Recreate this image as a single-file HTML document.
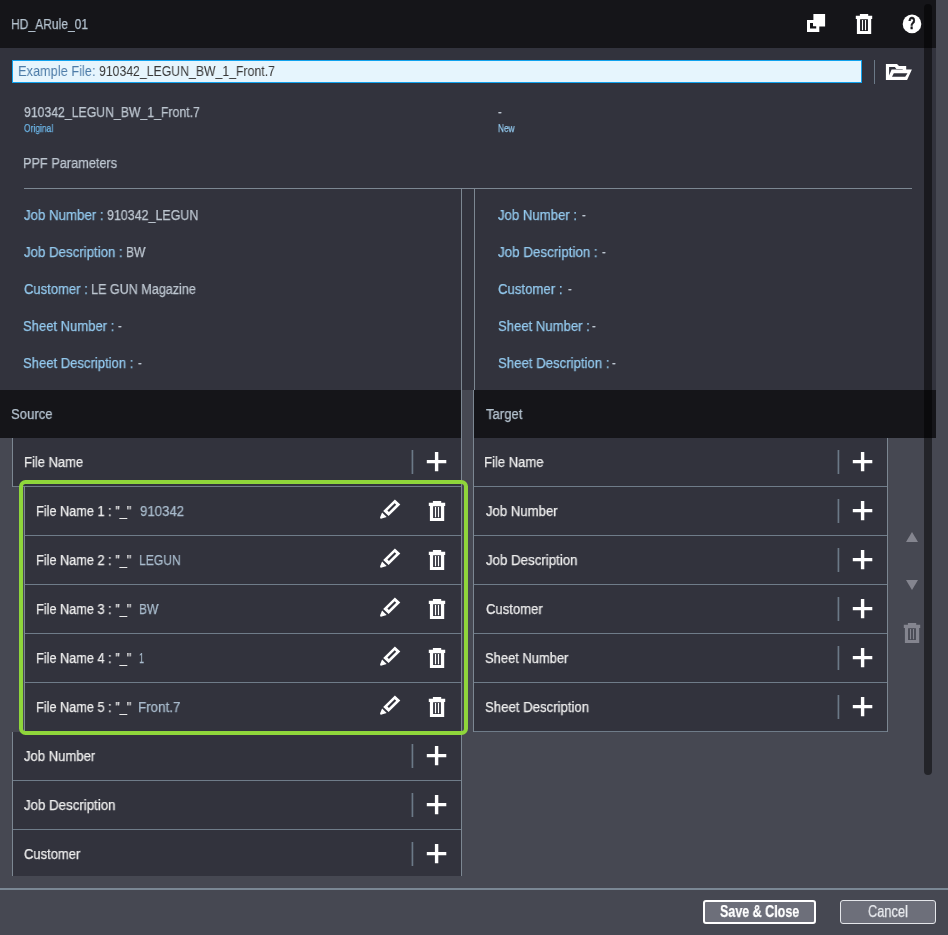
<!DOCTYPE html>
<html lang="en">
<head>
<meta charset="utf-8">
<title>HD_ARule_01</title>
<style>
*{box-sizing:border-box;margin:0;padding:0}
html,body{width:948px;height:935px;overflow:hidden;background:#464852}
body{position:relative;font-family:"Liberation Sans",sans-serif;font-size:14.7px;color:#bdc6d0}
.s{display:inline-block;white-space:pre;transform-origin:0 50%;line-height:1}
.abs{position:absolute}
.t{position:absolute;white-space:pre;line-height:1;transform-origin:0 0;will-change:transform;-webkit-text-stroke:.25px currentColor}
.hdr{position:absolute;left:0;top:0;width:936px;height:48px;background:#151519}
.top{position:absolute;left:0;top:48px;width:936px;height:342px;background:#32333d}
.inp{position:absolute;left:12px;top:12px;width:850px;height:23px;background:#e6f5fd;border:1px solid #10a2ee}
.vsep{position:absolute;width:1px;background:#6b7987}
.rule{position:absolute;left:24px;top:140px;width:888px;height:1px;background:#7c8792}
.vl{position:absolute;top:140px;width:1px;height:202px;background:#7c8792}
.bar{position:absolute;top:390px;height:48px;background:#151519}
.list{position:absolute;top:438px;overflow:hidden}
.vline{position:absolute;width:1px;background:#7c8792}
.nestwrap{margin-left:12px;width:438px}
.row{position:relative;height:49px;border-bottom:1px solid #6f7c89;background:#32333d}
.row .t{top:16px}
.row .vsep{top:12px;height:24px;width:3px;background:linear-gradient(90deg,rgba(107,121,135,.4) 0 1px,#6b7987 1px 2px,rgba(107,121,135,.25) 2px 3px)}
.plus{position:absolute;top:13px;width:21px;height:21px}
.ico{position:absolute}
.thumb{position:absolute;left:924px;top:4px;width:8px;height:771px;border-radius:4px;background:rgba(0,0,0,.5)}
.foot{position:absolute;left:0;top:888px;width:948px;height:2px;background:#7a8794}
.btn{position:absolute;top:900px;height:24px;background:#6d6f7a;border-radius:3px;color:#fff}
</style>
</head>
<body>

<header class="hdr">
  <span class="t" style="left:11px;top:17.00px;color:#b4c2cf;transform:scaleX(0.8205)">HD_ARule_01</span>
  <svg class="ico" style="left:806px;top:13px" width="21" height="21" viewBox="806 13 21 21">
    <rect x="813.4" y="14" width="11.7" height="12.5" fill="#fff"/>
    <rect x="807" y="20" width="12.3" height="12" fill="#fff"/>
    <path d="M810 23h3v3.2h3.2v2.4H810z" fill="#151519"/>
  </svg>
  <svg class="ico" style="left:855px;top:13px" width="18" height="22" viewBox="0 0 18 22">
    <use href="#trash" fill="#fff"/>
  </svg>
  <svg class="ico" style="left:902px;top:14px;will-change:transform" width="20" height="20" viewBox="0 0 20 20">
    <circle cx="10" cy="9.9" r="9.3" fill="#fff"/>
    <text transform="translate(9.85 15.3) scale(.74 1)" text-anchor="middle" font-family="Liberation Sans, sans-serif" font-weight="700" font-size="16.3" fill="#151519" stroke="#151519" stroke-width=".55">?</text>
  </svg>
</header>

<svg width="0" height="0" style="position:absolute">
  <defs>
    <g id="trash">
      <path fill-rule="evenodd" d="M4.9 .9h8.3v1.9h4v3.2h-1v15H1.9v-15h-1.1V2.8h4.1z M5.1 6.2v11.7h7.8V6.2z M6.9 7h1.2v10.2H6.9z M9.9 7h1.2v10.2H9.9z"/>
    </g>
    <g id="plus"><path d="M8.9 .9h3.4v8h8v3.3h-8v8H8.9v-8H.8V8.9h8.1z"/></g>
    <g id="pencil">
      <path fill-rule="evenodd" d="M14.9 .4L20.3 5.6 8.6 17.1 3.2 12z M14.7 4.3L7.4 11.5 8.9 13 16.2 5.8z"/>
      <path d="M2.1 13.5L6.7 18 1.7 19.6Q-.3 20 .2 18z"/>
    </g>
  </defs>
</svg>

<section class="top">
  <div class="inp"></div>
  <span class="t" style="left:18px;top:16.00px;color:#4d7ca8;-webkit-text-stroke:0;transform:scaleX(0.8702)">Example File:</span>
  <span class="t" style="left:99px;top:16.00px;color:#383838;-webkit-text-stroke:0;transform:scaleX(0.8349)">910342_LEGUN_BW_1_Front.7</span>
  <div class="vsep" style="left:874px;top:12px;height:24px"></div>
  <svg class="ico" style="left:884px;top:14px" width="30" height="20" viewBox="884 62 30 20">
    <path fill="#fff" fill-rule="evenodd" d="M885.9 64H897l2 1.9h7.2v3.6h5.7L907.1 80H885.9z M889.1 67v8.5l2.5-5.9h11.1v-.7h-6.3L894.8 67z M893.8 73.3h13.7l-2.3 3.5H892z"/>
  </svg>

  <span class="t" style="left:24px;top:57.00px;color:#bdc6d0;transform:scaleX(0.8346)">910342_LEGUN_BW_1_Front.7</span>
  <span class="t" style="left:24px;top:75.00px;color:#6db6e8;font-size:11px;transform:scaleX(0.7698)">Original</span>
  <span class="t" style="left:498px;top:57.00px;color:#bdc6d0;transform:scaleX(0.7507)">-</span>
  <span class="t" style="left:498px;top:75.00px;color:#93c9ee;font-size:11px;transform:scaleX(0.7505)">New</span>
  <span class="t" style="left:23px;top:108.00px;color:#bdc6d0;transform:scaleX(0.8663)">PPF Parameters</span>
  <div class="rule"></div>
  <div class="vl" style="left:461px"></div>
  <div class="vl" style="left:474px"></div>

  <span class="t" style="left:24px;top:160.00px;color:#93c9ee;transform:scaleX(0.9030)">Job Number :</span><span class="t" style="left:107px;top:160.00px;color:#bdc6d0;transform:scaleX(0.8472)">910342_LEGUN</span>
  <span class="t" style="left:24px;top:197.00px;color:#93c9ee;transform:scaleX(0.9025)">Job Description :</span><span class="t" style="left:126px;top:197.00px;color:#bdc6d0;transform:scaleX(0.8155)">BW</span>
  <span class="t" style="left:24px;top:234.00px;color:#93c9ee;transform:scaleX(0.8885)">Customer :</span><span class="t" style="left:91px;top:234.00px;color:#bdc6d0;transform:scaleX(0.8563)">LE GUN Magazine</span>
  <span class="t" style="left:23px;top:271.00px;color:#93c9ee;transform:scaleX(0.8869)">Sheet Number :</span><span class="t" style="left:118px;top:271.00px;color:#bdc6d0;transform:scaleX(0.7507)">-</span>
  <span class="t" style="left:23px;top:308.00px;color:#93c9ee;transform:scaleX(0.8895)">Sheet Description :</span><span class="t" style="left:138px;top:308.00px;color:#bdc6d0;transform:scaleX(0.7507)">-</span>

  <span class="t" style="left:498px;top:160.00px;color:#93c9ee;transform:scaleX(0.8969)">Job Number :</span><span class="t" style="left:582px;top:160.00px;color:#bdc6d0;transform:scaleX(0.7507)">-</span>
  <span class="t" style="left:498px;top:197.00px;color:#93c9ee;transform:scaleX(0.9114)">Job Description :</span><span class="t" style="left:602px;top:197.00px;color:#bdc6d0;transform:scaleX(0.7507)">-</span>
  <span class="t" style="left:498px;top:234.00px;color:#93c9ee;transform:scaleX(0.8981)">Customer :</span><span class="t" style="left:568px;top:234.00px;color:#bdc6d0;transform:scaleX(0.7507)">-</span>
  <span class="t" style="left:498px;top:271.00px;color:#93c9ee;transform:scaleX(0.8927)">Sheet Number :</span><span class="t" style="left:592px;top:271.00px;color:#bdc6d0;transform:scaleX(0.7507)">-</span>
  <span class="t" style="left:498px;top:308.00px;color:#93c9ee;transform:scaleX(0.8987)">Sheet Description :</span><span class="t" style="left:612px;top:308.00px;color:#bdc6d0;transform:scaleX(0.7507)">-</span>
</section>

<div class="bar" style="left:0;width:461px"><span class="t" style="left:11px;top:17.00px;color:#b4c2cf;transform:scaleX(0.8940)">Source</span></div>
<div class="bar" style="left:474px;width:462px"><span class="t" style="left:12px;top:17.00px;color:#b4c2cf;transform:scaleX(0.8914)">Target</span></div>

<!-- SOURCE LIST -->
<section class="list" style="left:12px;width:449px;height:438px">
  <div class="row">
    <span class="t" style="left:12px;top:17.00px;color:#ececec;transform:scaleX(0.8844)">File Name</span>
    <div class="vsep" style="left:399px"></div>
    <svg class="plus" style="left:413.95px" viewBox="0 0 21 21"><use href="#plus" fill="#fff"/></svg>
  </div>
  <div class="nestwrap">
  <div class="row nest">
    <span class="t" style="left:12px;top:17.00px;color:#ececec;transform:scaleX(0.8659)">File Name 1 : "_"</span><span class="t" style="left:116px;top:17.00px;color:#a9bccd;transform:scaleX(0.9003)">910342</span>
    <svg class="ico" style="left:355.8px;top:12px" width="21" height="21" viewBox="0 0 21 21"><use href="#pencil" fill="#fff"/></svg>
    <svg class="ico" style="left:404.1px;top:12.7px" width="18" height="22" viewBox="0 0 18 22"><use href="#trash" fill="#fff"/></svg>
  </div>
  <div class="row nest">
    <span class="t" style="left:12px;top:17.00px;color:#ececec;transform:scaleX(0.8659)">File Name 2 : "_"</span><span class="t" style="left:115px;top:17.00px;color:#a9bccd;transform:scaleX(0.8240)">LEGUN</span>
    <svg class="ico" style="left:355.8px;top:12px" width="21" height="21" viewBox="0 0 21 21"><use href="#pencil" fill="#fff"/></svg>
    <svg class="ico" style="left:404.1px;top:12.7px" width="18" height="22" viewBox="0 0 18 22"><use href="#trash" fill="#fff"/></svg>
  </div>
  <div class="row nest">
    <span class="t" style="left:12px;top:17.00px;color:#ececec;transform:scaleX(0.8659)">File Name 3 : "_"</span><span class="t" style="left:115px;top:17.00px;color:#a9bccd;transform:scaleX(0.8155)">BW</span>
    <svg class="ico" style="left:355.8px;top:12px" width="21" height="21" viewBox="0 0 21 21"><use href="#pencil" fill="#fff"/></svg>
    <svg class="ico" style="left:404.1px;top:12.7px" width="18" height="22" viewBox="0 0 18 22"><use href="#trash" fill="#fff"/></svg>
  </div>
  <div class="row nest">
    <span class="t" style="left:12px;top:17.00px;color:#ececec;transform:scaleX(0.8659)">File Name 4 : "_"</span><span class="t" style="left:115px;top:17.00px;color:#a9bccd;transform:scaleX(0.6175)">1</span>
    <svg class="ico" style="left:355.8px;top:12px" width="21" height="21" viewBox="0 0 21 21"><use href="#pencil" fill="#fff"/></svg>
    <svg class="ico" style="left:404.1px;top:12.7px" width="18" height="22" viewBox="0 0 18 22"><use href="#trash" fill="#fff"/></svg>
  </div>
  <div class="row nest">
    <span class="t" style="left:12px;top:17.00px;color:#ececec;transform:scaleX(0.8659)">File Name 5 : "_"</span><span class="t" style="left:114px;top:17.00px;color:#a9bccd;transform:scaleX(0.9135)">Front.7</span>
    <svg class="ico" style="left:355.8px;top:12px" width="21" height="21" viewBox="0 0 21 21"><use href="#pencil" fill="#fff"/></svg>
    <svg class="ico" style="left:404.1px;top:12.7px" width="18" height="22" viewBox="0 0 18 22"><use href="#trash" fill="#fff"/></svg>
  </div>
  </div>
  <div class="row">
    <span class="t" style="left:12px;top:17.00px;color:#ececec;transform:scaleX(0.8902)">Job Number</span>
    <div class="vsep" style="left:399px"></div>
    <svg class="plus" style="left:413.95px" viewBox="0 0 21 21"><use href="#plus" fill="#fff"/></svg>
  </div>
  <div class="row">
    <span class="t" style="left:12px;top:17.00px;color:#ececec;transform:scaleX(0.9037)">Job Description</span>
    <div class="vsep" style="left:399px"></div>
    <svg class="plus" style="left:413.95px" viewBox="0 0 21 21"><use href="#plus" fill="#fff"/></svg>
  </div>
  <div class="row">
    <span class="t" style="left:12px;top:17.00px;color:#ececec;transform:scaleX(0.8851)">Customer</span>
    <div class="vsep" style="left:399px"></div>
    <svg class="plus" style="left:413.95px" viewBox="0 0 21 21"><use href="#plus" fill="#fff"/></svg>
  </div>
</section>
<div class="vline" style="left:12px;top:438px;height:49px"></div>
<div class="vline" style="left:12px;top:732px;height:144px"></div>
<div class="vline" style="left:461px;top:390px;height:486px"></div>
<div class="vline" style="left:473px;top:390px;height:342px"></div>
<div class="vline" style="left:887px;top:438px;height:294px"></div>
<div class="vline" style="left:24px;top:486px;height:246px"></div>
<div class="abs" style="left:18.5px;top:480.4px;width:449.3px;height:254.2px;border:4.3px solid #8fd63b;border-radius:6.5px"></div>

<!-- TARGET LIST -->
<section class="list" style="left:474px;width:413px;height:294px">
  <div class="row">
    <span class="t" style="left:10px;top:17.00px;color:#ececec;transform:scaleX(0.8897)">File Name</span>
    <div class="vsep" style="left:363px"></div>
    <svg class="plus" style="left:377.9px" viewBox="0 0 21 21"><use href="#plus" fill="#fff"/></svg>
  </div>
  <div class="row">
    <span class="t" style="left:12px;top:17.00px;color:#ececec;transform:scaleX(0.8954)">Job Number</span>
    <div class="vsep" style="left:363px"></div>
    <svg class="plus" style="left:377.9px" viewBox="0 0 21 21"><use href="#plus" fill="#fff"/></svg>
  </div>
  <div class="row">
    <span class="t" style="left:12px;top:17.00px;color:#ececec;transform:scaleX(0.9037)">Job Description</span>
    <div class="vsep" style="left:363px"></div>
    <svg class="plus" style="left:377.9px" viewBox="0 0 21 21"><use href="#plus" fill="#fff"/></svg>
  </div>
  <div class="row">
    <span class="t" style="left:12px;top:17.00px;color:#ececec;transform:scaleX(0.8917)">Customer</span>
    <div class="vsep" style="left:363px"></div>
    <svg class="plus" style="left:377.9px" viewBox="0 0 21 21"><use href="#plus" fill="#fff"/></svg>
  </div>
  <div class="row">
    <span class="t" style="left:11px;top:17.00px;color:#ececec;transform:scaleX(0.8803)">Sheet Number</span>
    <div class="vsep" style="left:363px"></div>
    <svg class="plus" style="left:377.9px" viewBox="0 0 21 21"><use href="#plus" fill="#fff"/></svg>
  </div>
  <div class="row">
    <span class="t" style="left:11px;top:17.00px;color:#ececec;transform:scaleX(0.8983)">Sheet Description</span>
    <div class="vsep" style="left:363px"></div>
    <svg class="plus" style="left:377.9px" viewBox="0 0 21 21"><use href="#plus" fill="#fff"/></svg>
  </div>
</section>

<aside>
  <svg class="ico" style="left:905px;top:531px" width="14" height="12" viewBox="0 0 14 12"><path d="M7 1L13 11H1z" fill="#84858f"/></svg>
  <svg class="ico" style="left:905px;top:579px" width="14" height="12" viewBox="0 0 14 12"><path d="M1 1H13L7 11z" fill="#84858f"/></svg>
  <svg class="ico" style="left:903px;top:622px" width="18" height="22" viewBox="0 0 18 22"><use href="#trash" fill="#84858f"/></svg>
</aside>

<div class="thumb"></div>

<div class="foot"></div>
<div class="btn" style="left:703px;width:113px;border:2px solid #fff"><span class="t" style="left:15px;top:1.00px;color:#fff;font-size:16.5px;font-weight:700;transform:scaleX(0.7582)">Save &amp; Close</span></div>
<div class="btn" style="left:840px;width:96px;border:1px solid #e4e6ea"><span class="t" style="left:27px;top:2.00px;color:#e8eaee;font-size:16.5px;transform:scaleX(0.7769)">Cancel</span></div>

</body>
</html>
